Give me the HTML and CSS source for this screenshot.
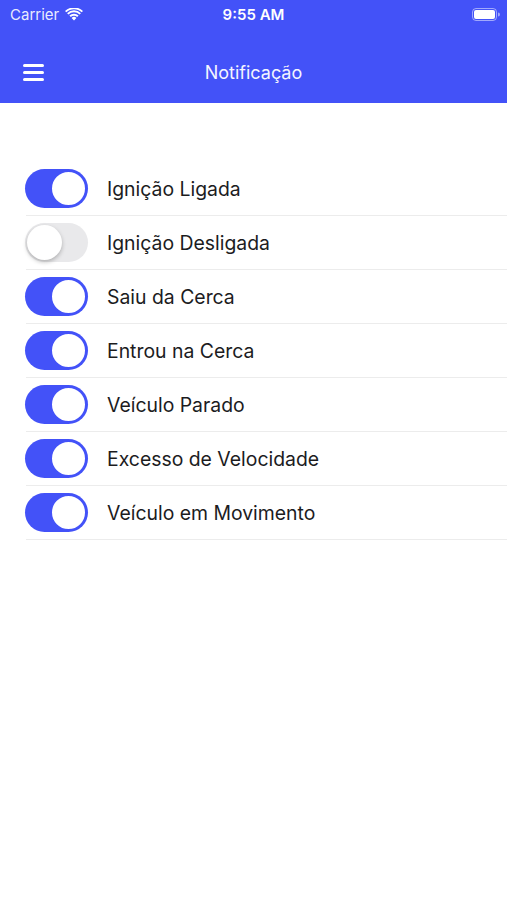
FILE: index.html
```html
<!DOCTYPE html>
<html lang="pt">
<head>
    <meta charset="UTF-8">
    <meta name="viewport" content="width=device-width, initial-scale=1.0">
    <title>Notificação</title>
    <link rel="stylesheet" href="styles.css">
</head>
<body>
    <header class="top">
        <div class="status-bar">
            <div class="status-left">
                <span>Carrier</span>
                <svg class="wifi" width="18" height="13" viewBox="0 0 18 13">
                    <path d="M9 12.5 L6.6 9.9 A3.4 3.4 0 0 1 11.4 9.9 Z" fill="#fff"/>
                    <path d="M4.4 7.6 A6.6 6.6 0 0 1 13.6 7.6 L12.2 9.1 A4.6 4.6 0 0 0 5.8 9.1 Z" fill="#fff"/>
                    <path d="M2.1 5.2 A9.8 9.8 0 0 1 15.9 5.2 L14.6 6.6 A7.8 7.8 0 0 0 3.4 6.6 Z" fill="#fff"/>
                    <path d="M0 3 A13 13 0 0 1 18 3 L16.7 4.3 A11 11 0 0 0 1.3 4.3 Z" fill="#fff"/>
                </svg>
            </div>
            <div class="status-time">9:55 AM</div>
            <div class="status-right">
                <svg width="28" height="13" viewBox="0 0 28 13">
                    <rect x="0.5" y="0.5" width="24" height="12" rx="3.5" fill="none" stroke="rgba(255,255,255,0.5)"/>
                    <rect x="2" y="2" width="21" height="9" rx="2" fill="#fff"/>
                    <path d="M26 4.5 A2 2 0 0 1 26 8.5 Z" fill="rgba(255,255,255,0.5)"/>
                </svg>
            </div>
        </div>
        <div class="nav-bar">
            <button class="menu-btn" aria-label="Menu">
                <span></span><span></span><span></span>
            </button>
            <h1 class="nav-title">Notificação</h1>
        </div>
    </header>

    <ul class="settings">
        <li class="setting">
            <span class="switch on"><span class="knob"></span></span>
            <span class="label">Ignição Ligada</span>
        </li>
        <li class="setting">
            <span class="switch"><span class="knob"></span></span>
            <span class="label">Ignição Desligada</span>
        </li>
        <li class="setting">
            <span class="switch on"><span class="knob"></span></span>
            <span class="label">Saiu da Cerca</span>
        </li>
        <li class="setting">
            <span class="switch on"><span class="knob"></span></span>
            <span class="label">Entrou na Cerca</span>
        </li>
        <li class="setting">
            <span class="switch on"><span class="knob"></span></span>
            <span class="label">Veículo Parado</span>
        </li>
        <li class="setting">
            <span class="switch on"><span class="knob"></span></span>
            <span class="label">Excesso de Velocidade</span>
        </li>
        <li class="setting">
            <span class="switch on"><span class="knob"></span></span>
            <span class="label">Veículo em Movimento</span>
        </li>
    </ul>
</body>
</html>
```

FILE: styles.css
```css
body {
    margin: 0;
    padding: 0;
    background-color: white;
    font-family: Inter, "Liberation Sans", Arial, sans-serif;
    color: #1c1c1e;
}
.top {
    background-color: #4352f8;
    color: white;
    height: 103px;
}
.status-bar {
    height: 28px;
    display: flex;
    align-items: center;
    justify-content: space-between;
    padding: 0 7px 0 10px;
    font-size: 15px;
    position: relative;
}
.status-left {
    display: flex;
    align-items: center;
    gap: 6px;
    color: rgba(255, 255, 255, 0.9);
}
.status-time {
    position: absolute;
    left: 0;
    right: 0;
    text-align: center;
    font-weight: 600;
    font-size: 15px;
}
.status-right {
    display: flex;
    align-items: center;
}
.nav-bar {
    height: 75px;
    box-sizing: border-box;
    padding-top: 13px;
    display: flex;
    align-items: center;
    position: relative;
}
.menu-btn {
    background: none;
    border: none;
    padding: 0;
    margin-left: 23px;
    width: 21px;
    display: flex;
    flex-direction: column;
    gap: 4px;
    position: relative;
    z-index: 1;
}
.menu-btn span {
    display: block;
    height: 3px;
    border-radius: 2px;
    background: white;
}
.nav-title {
    position: absolute;
    left: 0;
    right: 0;
    margin: 0;
    text-align: center;
    font-size: 18px;
    font-weight: normal;
    color: #f4f5ff;
}
.settings {
    list-style: none;
    margin: 0;
    padding: 59px 0 0 26px;
}
.setting {
    height: 53px;
    display: flex;
    align-items: center;
    border-bottom: 1px solid #ececec;
}
.switch {
    width: 63px;
    height: 39px;
    border-radius: 20px;
    background: #e9e9eb;
    margin-left: -1px;
    position: relative;
    flex-shrink: 0;
}
.switch .knob {
    position: absolute;
    top: 2px;
    left: 2px;
    width: 35px;
    height: 35px;
    border-radius: 50%;
    background: white;
    box-shadow: 0 2px 4px rgba(0, 0, 0, 0.25);
}
.switch.on {
    background: #4352f8;
}
.switch.on .knob {
    left: auto;
    right: 1px;
    top: 1px;
    width: 33px;
    height: 33px;
    border: 2px solid #4352f8;
    box-shadow: none;
}
.label {
    margin-left: 19px;
    font-size: 19.4px;
}
```
